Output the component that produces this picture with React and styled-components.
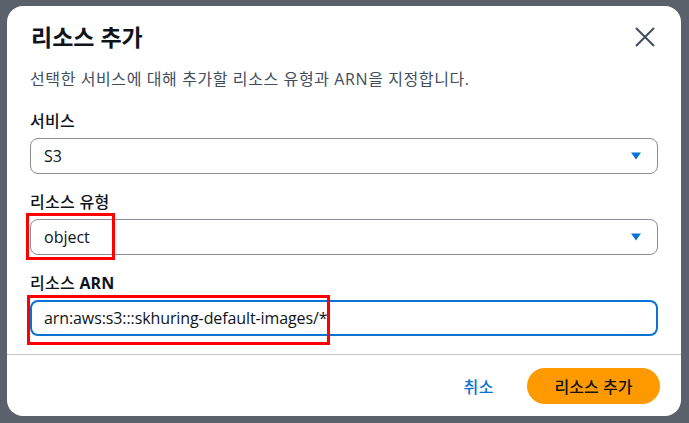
import React from 'react'
import styled, { createGlobalStyle } from 'styled-components'

const GlobalStyle = createGlobalStyle`
  html, body {
    margin: 0;
    padding: 0;
    background: #5b616b;
  }
  body {
    font-family: 'Open Sans', 'Noto Sans CJK KR', sans-serif;
    color: #0f141a;
  }
`

const Page = styled.div`
  width: 689px;
  height: 423px;
  box-sizing: border-box;
  padding: 6px 8px 7px 7px;
`

const Modal = styled.div`
  background: #ffffff;
  border-radius: 16px;
  height: 100%;
  display: flex;
  flex-direction: column;
  overflow: hidden;
`

const Header = styled.div`
  display: flex;
  align-items: center;
  justify-content: space-between;
  padding: 16px 23px 0 23px;
`

const Title = styled.h2`
  margin: 0 0 0 1px;
  font-size: 23px;
  line-height: 30px;
  font-weight: 700;
  color: #0f141a;
`

const CloseButton = styled.button`
  display: flex;
  align-items: center;
  justify-content: center;
  width: 24px;
  height: 24px;
  padding: 0;
  margin-right: 1px;
  border: none;
  background: transparent;
  color: #414d5c;
  cursor: pointer;
`

const Body = styled.div`
  padding: 16px 23px 18px 23px;
`

const Description = styled.p`
  margin: 0 0 20px 0;
  font-size: 16px;
  line-height: 22px;
  letter-spacing: 0.6px;
  color: #414d5c;
`

const Fields = styled.div`
  display: flex;
  flex-direction: column;
  gap: 17px;
`

const Field = styled.div`
  display: flex;
  flex-direction: column;
  gap: 6px;
`

const Label = styled.label`
  font-size: 16px;
  line-height: 22px;
  font-weight: 500;
  letter-spacing: 0.3px;
  color: #0f141a;
`

const Strong = styled.span`
  font-weight: 700;
  letter-spacing: 0;
`

const Control = styled.div`
  position: relative;
  display: flex;
  align-items: center;
  justify-content: space-between;
  height: 36px;
  box-sizing: border-box;
  padding: 0 15px 0 12px;
  border: ${p => (p.focused ? '2px solid #0972d3' : '1px solid #8c8c94')};
  border-radius: 8px;
  font-size: 16px;
  color: #0f141a;
`

const Value = styled.span`
  padding-left: ${p => (p.focused ? '0' : '1px')};
  letter-spacing: ${p => (p.focused ? '-0.1px' : '0')};
`

const Highlight = styled.div`
  position: absolute;
  left: -5px;
  top: -7px;
  width: ${p => p.w}px;
  height: ${p => p.h}px;
  box-sizing: border-box;
  border: 3px solid #ff0000;
  pointer-events: none;
`

const Divider = styled.hr`
  margin: 0;
  border: none;
  border-top: 1px solid #c6c6cd;
`

const Footer = styled.div`
  display: flex;
  justify-content: flex-end;
  align-items: center;
  gap: 33px;
  padding: 13px 21px 0 23px;
`

const LinkButton = styled.button`
  border: none;
  background: transparent;
  padding: 0;
  font-family: inherit;
  font-size: 16px;
  font-weight: 500;
  letter-spacing: 0.5px;
  color: #0972d3;
  cursor: pointer;
`

const PrimaryButton = styled.button`
  width: 133px;
  height: 36px;
  border: none;
  border-radius: 20px;
  background: #ff9900;
  font-family: inherit;
  font-size: 16px;
  font-weight: 500;
  color: #0f141a;
  cursor: pointer;
`

const Caret = () => (
  <svg width="12" height="10" viewBox="0 0 12 10">
    <path d="M1 1.5h10L6 8.5z" fill="#0972d3" />
  </svg>
)

const SelectField = ({ label, value, highlight }) => (
  <Field>
    <Label>{label}</Label>
    <Control>
      <Value>{value}</Value>
      <Caret />
      {highlight && <Highlight w={89} h={47} />}
    </Control>
  </Field>
)

const App = () => {
  return (
    <>
      <GlobalStyle />
      <Page>
        <Modal>
          <Header>
            <Title>리소스 추가</Title>
            <CloseButton aria-label="닫기">
              <svg width="20" height="20" viewBox="0 0 20 20">
                <path
                  d="M1.5 1.5l17 17M18.5 1.5l-17 17"
                  stroke="currentColor"
                  strokeWidth="2"
                  strokeLinecap="round"
                />
              </svg>
            </CloseButton>
          </Header>
          <Body>
            <Description>
              선택한 서비스에 대해 추가할 리소스 유형과 ARN을 지정합니다.
            </Description>
            <Fields>
              <SelectField label="서비스" value="S3" />
              <SelectField label="리소스 유형" value="object" highlight />
              <Field>
                <Label>
                  리소스 <Strong>ARN</Strong>
                </Label>
                <Control focused>
                  <Value focused>arn:aws:s3:::skhuring-default-images/*</Value>
                  <Highlight w={303} h={50} />
                </Control>
              </Field>
            </Fields>
          </Body>
          <Divider />
          <Footer>
            <LinkButton>취소</LinkButton>
            <PrimaryButton>리소스 추가</PrimaryButton>
          </Footer>
        </Modal>
      </Page>
    </>
  )
}

export default App
